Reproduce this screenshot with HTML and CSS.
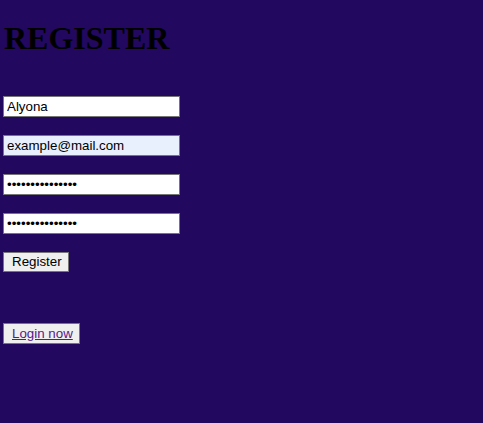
FILE: index.html
```html
<!DOCTYPE html>
<html>
<head>
<meta charset="utf-8">
<link rel="stylesheet" href="styles.css">
</head>
<body>
<div class="page">
  <h1 class="title">REGISTER</h1>
  <form class="form">
    <input class="field" type="text" value="Alyona">
    <input class="field field-filled" type="email" value="example@mail.com">
    <input class="field" type="password" value="aaaaaaaaaaaaaaa">
    <input class="field" type="password" value="aaaaaaaaaaaaaaa">
    <div><button class="btn" type="button">Register</button></div>
  </form>
  <div class="login"><button class="btn" type="button"><a class="link" href="#">Login now</a></button></div>
</div>
</body>
</html>
```

FILE: styles.css
```css
html, body {
  margin: 0;
  padding: 0;
  background: #22085f;
  height: 100%;
}
.page {
  padding: 0 3px;
  display: flex;
  flex-direction: column;
  align-items: flex-start;
}
.title {
  font-family: "Liberation Serif", serif;
  font-weight: bold;
  font-size: 32px;
  line-height: 37px;
  margin: 20px 0 0 1px;
  color: #000;
}
.form {
  margin-top: 39px;
  display: flex;
  flex-direction: column;
  align-items: flex-start;
  gap: 18px;
}
.field {
  box-sizing: border-box;
  width: 177px;
  height: 21px;
  margin: 0;
  padding: 1px 3px;
  border: 1px solid #767676;
  background: #fff;
  font-family: "Liberation Sans", Arial, sans-serif;
  font-size: 13.33px;
  color: #000;
  outline: none;
}
.field-filled {
  background: #e8f0fe;
}
.btn {
  box-sizing: border-box;
  height: 20px;
  margin: 0;
  padding: 1px 6px 1px 8px;
  border: 1px solid #767676;
  background: #efefef;
  font-family: "Liberation Sans", Arial, sans-serif;
  font-size: 13.33px;
  color: #000;
  line-height: 16px;
}
.login {
  margin-top: 51px;
}
.login .btn {
  height: 21px;
}
.link {
  color: #551a8b;
  text-decoration: underline;
}
```
